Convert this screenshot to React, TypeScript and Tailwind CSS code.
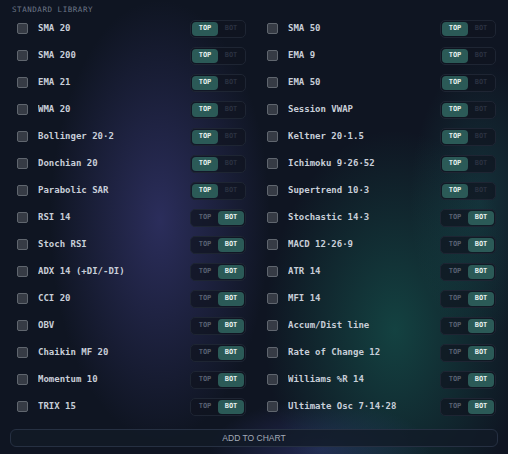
import { FC } from "react";

type Indicator = { name: string; pane: "top" | "bot" };

const left: Indicator[] = [
  { name: "SMA 20", pane: "top" },
  { name: "SMA 200", pane: "top" },
  { name: "EMA 21", pane: "top" },
  { name: "WMA 20", pane: "top" },
  { name: "Bollinger 20·2", pane: "top" },
  { name: "Donchian 20", pane: "top" },
  { name: "Parabolic SAR", pane: "top" },
  { name: "RSI 14", pane: "bot" },
  { name: "Stoch RSI", pane: "bot" },
  { name: "ADX 14 (+DI/-DI)", pane: "bot" },
  { name: "CCI 20", pane: "bot" },
  { name: "OBV", pane: "bot" },
  { name: "Chaikin MF 20", pane: "bot" },
  { name: "Momentum 10", pane: "bot" },
  { name: "TRIX 15", pane: "bot" },
];

const right: Indicator[] = [
  { name: "SMA 50", pane: "top" },
  { name: "EMA 9", pane: "top" },
  { name: "EMA 50", pane: "top" },
  { name: "Session VWAP", pane: "top" },
  { name: "Keltner 20·1.5", pane: "top" },
  { name: "Ichimoku 9·26·52", pane: "top" },
  { name: "Supertrend 10·3", pane: "top" },
  { name: "Stochastic 14·3", pane: "bot" },
  { name: "MACD 12·26·9", pane: "bot" },
  { name: "ATR 14", pane: "bot" },
  { name: "MFI 14", pane: "bot" },
  { name: "Accum/Dist line", pane: "bot" },
  { name: "Rate of Change 12", pane: "bot" },
  { name: "Williams %R 14", pane: "bot" },
  { name: "Ultimate Osc 7·14·28", pane: "bot" },
];

// interleave so the grid reads left/right per row
const rows = left.flatMap((l, i) => [l, right[i]]);

const PaneToggle: FC<{ pane: "top" | "bot" }> = ({ pane }) => {
  const on = "bg-[#2b5a57] text-[#e4efed]";
  return (
    <div className="flex h-[18px] w-[56px] shrink-0 rounded-[5px] border border-[#1e2533] bg-[#0f1420]/70 p-[1px]">
      <span
        className={`flex flex-1 items-center justify-center rounded-[4px] text-[7px] font-bold ${
          pane === "top" ? on : "text-[#586071]"
        }`}
      >
        TOP
      </span>
      <span
        className={`flex flex-1 items-center justify-center rounded-[4px] text-[7px] font-bold ${
          pane === "bot" ? on : "text-[#2a3140]"
        }`}
      >
        BOT
      </span>
    </div>
  );
};

const Row: FC<{ item: Indicator }> = ({ item }) => (
  <div className="flex h-[27px] items-center pl-[7px] pr-0.5">
    <span className="h-[11px] w-[11px] shrink-0 rounded-[2px] border border-[#60666f] bg-[#363b45]" />
    <span className="ml-[10px] flex-1 truncate text-[9px] font-bold text-[#c8ced8]">{item.name}</span>
    <PaneToggle pane={item.pane} />
  </div>
);

export default function App() {
  return (
    <div className="h-[454px] w-[508px] overflow-hidden bg-[#0f1522] font-['DejaVu_Sans_Mono',monospace]">
      <div className="h-full w-full bg-[radial-gradient(ellipse_110px_220px_at_160px_220px,rgba(62,62,130,0.6),transparent),radial-gradient(ellipse_130px_200px_at_395px_330px,rgba(24,110,96,0.5),transparent),radial-gradient(ellipse_70px_140px_at_480px_200px,rgba(30,100,100,0.35),transparent),radial-gradient(ellipse_110px_50px_at_320px_450px,rgba(55,60,130,0.5),transparent)] px-[10px]">
        <div className="pl-0.5 pt-[4px] text-[7.5px] leading-[11px] tracking-[0.55px] text-[#6c7587]">
          STANDARD LIBRARY
        </div>
        <div className="grid grid-cols-2 gap-x-3">
          {rows.map((r, i) => (
            <Row key={i} item={r} />
          ))}
        </div>
        <button className="mt-[9px] flex h-[18px] w-full items-center justify-center rounded-md border border-[#263042] bg-[#121a27]/80 font-['Liberation_Sans',sans-serif] text-[8.5px] text-[#a4abb8]">
          ADD TO CHART
        </button>
      </div>
    </div>
  );
}
